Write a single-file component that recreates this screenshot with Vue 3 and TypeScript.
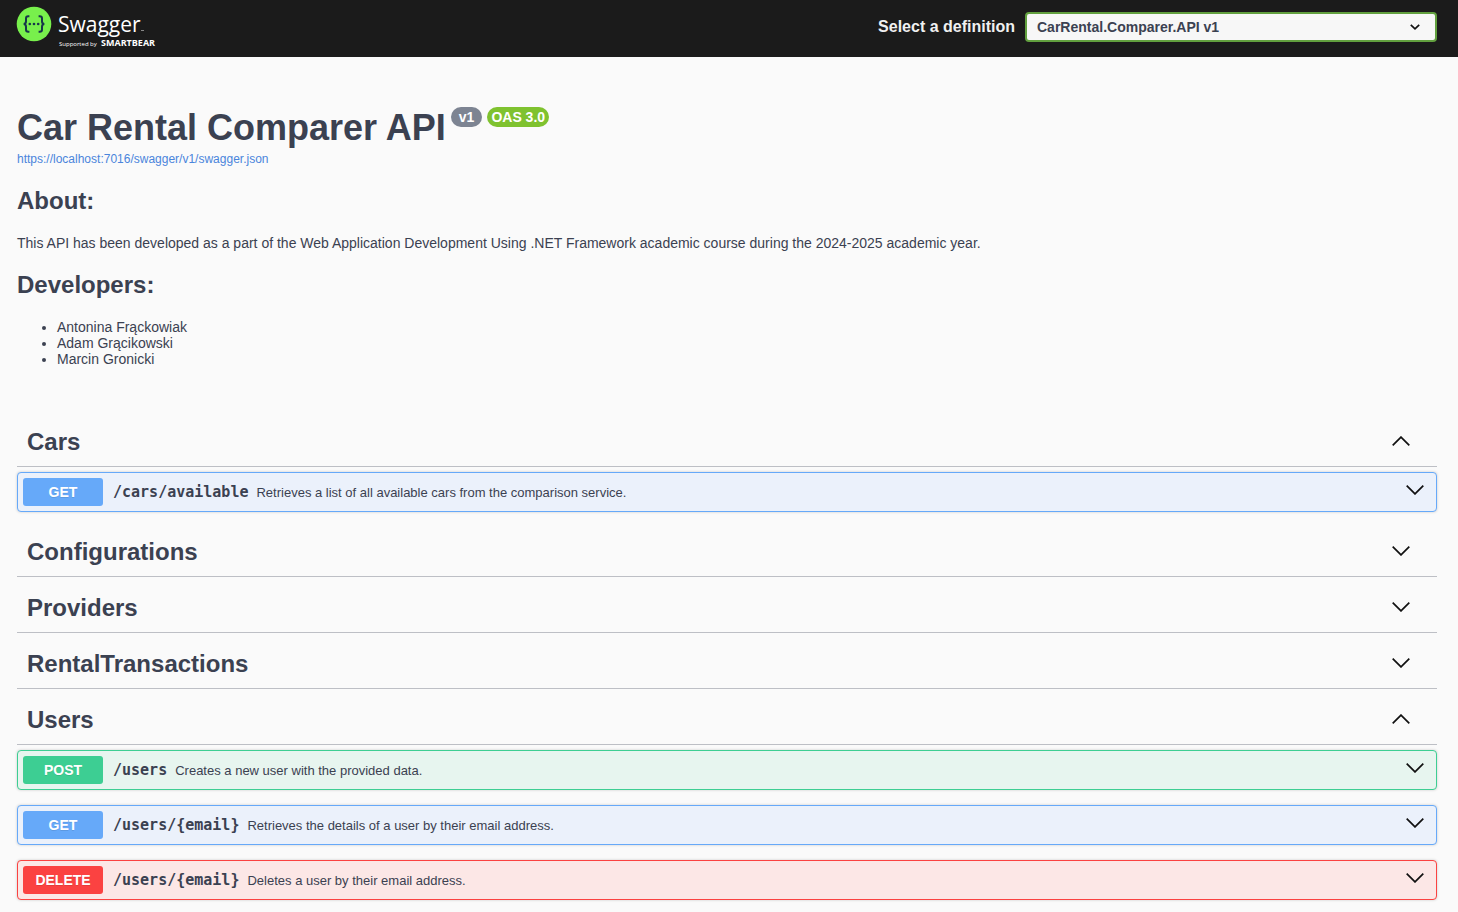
<script setup lang="ts">
import { ref } from 'vue'

type Method = 'get' | 'post' | 'delete'

interface Operation {
  method: Method
  path: string
  summary: string
}

interface Tag {
  name: string
  open: boolean
  operations: Operation[]
}

const definition = ref('v1')
const developers: string[] = ['Antonina Frąckowiak', 'Adam Grącikowski', 'Marcin Gronicki']

const tags = ref<Tag[]>([
  {
    name: 'Cars',
    open: true,
    operations: [
      {
        method: 'get',
        path: '/cars/available',
        summary: 'Retrieves a list of all available cars from the comparison service.',
      },
    ],
  },
  { name: 'Configurations', open: false, operations: [] },
  { name: 'Providers', open: false, operations: [] },
  { name: 'RentalTransactions', open: false, operations: [] },
  {
    name: 'Users',
    open: true,
    operations: [
      { method: 'post', path: '/users', summary: 'Creates a new user with the provided data.' },
      {
        method: 'get',
        path: '/users/{email}',
        summary: 'Retrieves the details of a user by their email address.',
      },
      { method: 'delete', path: '/users/{email}', summary: 'Deletes a user by their email address.' },
    ],
  },
])
</script>

<template>
  <div class="page">
    <header class="topbar">
      <a class="logo" href="#" aria-label="Swagger, supported by SmartBear">
        <svg width="144" height="44" viewBox="0 0 144 44">
          <circle cx="17" cy="19" r="17.3" fill="#78f04c" />
          <g fill="none" stroke="#17364a" stroke-width="2">
            <path d="M12.400 11.200h-1.200c-1.600 0-2.200.8-2.200 2.200v2.800c0 1.800-.7 2.800-2.400 2.800 1.700 0 2.400 1 2.400 2.800v2.800c0 1.400.6 2.200 2.200 2.200h1.200" />
            <path d="M21.600 11.200h1.200c1.600 0 2.200.8 2.200 2.200v2.800c0 1.800.7 2.800 2.400 2.800-1.700 0-2.400 1-2.400 2.800v2.800c0 1.400-.6 2.200-2.200 2.200h-1.200" />
          </g>
          <g fill="#17364a">
            <circle cx="12.800" cy="19" r="1.300" />
            <circle cx="17" cy="19" r="1.300" />
            <circle cx="21.200" cy="19" r="1.300" />
          </g>
          <text class="brand" x="41" y="27">Swagger</text>
          <path d="M124 25.500h3" stroke="#888" stroke-width="1" />
          <text class="support" x="42" y="41">Supported by</text>
          <text class="company" x="84" y="41">SMARTBEAR</text>
        </svg>
      </a>
      <form class="picker" @submit.prevent>
        <label for="definition">Select a definition</label>
        <div class="select-wrap">
          <select id="definition" v-model="definition">
            <option value="v1">CarRental.Comparer.API v1</option>
          </select>
          <svg class="select-arrow" width="10" height="6" viewBox="0 0 10 6" aria-hidden="true">
            <path d="M.8.8 5 4.800 9.200.8" fill="none" stroke="#111" stroke-width="1.700" />
          </svg>
        </div>
      </form>
    </header>

    <main class="content">
      <section class="info">
        <div class="title-row">
          <h1>Car Rental Comparer API</h1>
          <span class="badge version">v1</span>
          <span class="badge oas">OAS 3.0</span>
        </div>
        <a class="spec" href="#">https://localhost:7016/swagger/v1/swagger.json</a>
        <h2>About:</h2>
        <p>
          This API has been developed as a part of the Web Application Development Using .NET Framework
          academic course during the 2024-2025 academic year.
        </p>
        <h2>Developers:</h2>
        <ul>
          <li v-for="person in developers" :key="person">{{ person }}</li>
        </ul>
      </section>

      <section v-for="tag in tags" :key="tag.name" class="tag">
        <h3>
          <button class="tag-head" type="button" :aria-expanded="tag.open" @click="tag.open = !tag.open">
            <span>{{ tag.name }}</span>
            <svg class="arrow" width="18" height="10" viewBox="0 0 18 10" aria-hidden="true">
              <path v-if="tag.open" d="M.7 9.300 9 1.100l8.300 8.200" />
              <path v-else d="M.7.7 9 8.900l8.300-8.200" />
            </svg>
          </button>
        </h3>
        <div v-if="tag.open && tag.operations.length" class="operations">
          <button
            v-for="op in tag.operations"
            :key="op.method + op.path"
            type="button"
            class="operation"
            :class="op.method"
          >
            <span class="method">{{ op.method.toUpperCase() }}</span>
            <span class="path">{{ op.path }}</span>
            <span class="summary">{{ op.summary }}</span>
            <svg class="arrow" width="18" height="10" viewBox="0 0 18 10" aria-hidden="true">
              <path d="M.7.7 9 8.900l8.300-8.200" />
            </svg>
          </button>
        </div>
      </section>
    </main>
  </div>
</template>

<style>
html {
  background: #fafafa;
}
body {
  margin: 0;
  overflow-x: hidden;
}
::-webkit-scrollbar {
  display: none;
}
</style>

<style scoped>
.page {
  color: #3b4151;
  font-family: "Liberation Sans", Arial, sans-serif;
  font-size: 14px;
}
.page * {
  box-sizing: border-box;
}
button {
  margin: 0;
  border: 0;
  background: none;
  color: inherit;
  font: inherit;
  text-align: left;
  cursor: pointer;
}
.topbar {
  display: flex;
  align-items: center;
  justify-content: space-between;
  min-height: 57px;
  padding: 0 21px 3px 17px;
  background: #1b1b1b;
}
.logo {
  display: flex;
}
.logo svg {
  overflow: visible;
}
.logo text {
  fill: #fff;
  font-family: "Open Sans", "Noto Sans", sans-serif;
}
.logo .brand {
  font-size: 21px;
  font-weight: 400;
}
.logo .support {
  font-size: 6px;
}
.logo .company {
  font-size: 9px;
  font-weight: 700;
}
.picker {
  display: flex;
  align-items: center;
  gap: 10px;
  color: #f0f0f0;
}
.picker label {
  font-size: 16px;
  font-weight: 700;
}
.select-wrap {
  display: grid;
  align-items: center;
  width: 412px;
}
.select-wrap > * {
  grid-area: 1 / 1;
}
.select-wrap select {
  width: 100%;
  height: 30px;
  padding: 0 40px 0 10px;
  appearance: none;
  border: 2px solid #62a03f;
  border-radius: 4px;
  background: #f7f7f7;
  color: #3b4151;
  font: 700 14px "Liberation Sans", Arial, sans-serif;
}
.select-arrow {
  justify-self: end;
  margin-right: 17px;
  pointer-events: none;
}
.content {
  padding: 50px 21px 12px 17px;
}
.info {
  padding-bottom: 49px;
}
.title-row {
  display: flex;
  align-items: flex-start;
  gap: 5px;
}
h1 {
  margin: 0;
  font-size: 36px;
  line-height: 42px;
}
.badge {
  padding: 0 8px;
  border-radius: 10px;
  color: #fff;
  font-size: 14px;
  font-weight: 700;
  line-height: 20px;
}
.version {
  background: #7d8492;
}
.oas {
  padding: 0 4px;
  background: #7fc22f;
}
.spec {
  display: block;
  width: fit-content;
  margin-top: 2px;
  color: #4a85dc;
  font-size: 12px;
  line-height: 16px;
  text-decoration: none;
}
h2 {
  margin: 20px 0;
  font-size: 24px;
  line-height: 28px;
}
p {
  margin: 0;
  line-height: 16px;
}
ul {
  margin: 0;
  padding-left: 40px;
  line-height: 16px;
}
h3 {
  margin: 0;
  font-size: 24px;
}
.tag-head {
  display: flex;
  align-items: center;
  justify-content: space-between;
  width: 100%;
  height: 51px;
  margin-bottom: 5px;
  padding: 1px 27px 0 10px;
  border-bottom: 1px solid #bdbfc5;
  line-height: 28px;
}
.arrow {
  flex: none;
  fill: none;
  stroke: #111;
  stroke-width: 1.7;
}
.operations {
  display: grid;
  gap: 15px;
  padding-bottom: 14px;
}
.operation {
  display: flex;
  align-items: center;
  height: 40px;
  padding: 0 12px 0 5px;
  border: 1px solid var(--tone);
  border-radius: 4px;
  background: var(--tint);
  box-shadow: 0 0 3px rgba(0, 0, 0, 0.19);
}
.get {
  --tone: #66a9f9;
  --tint: #ebf1fb;
}
.post {
  --tone: #3dce93;
  --tint: #e7f5ef;
}
.delete {
  --tone: #fb4241;
  --tint: #fce7e6;
}
.method {
  width: 80px;
  border-radius: 3px;
  background: var(--tone);
  color: #fff;
  font-weight: 700;
  line-height: 28px;
  text-align: center;
  text-shadow: 0 1px 0 rgba(0, 0, 0, 0.1);
}
.path {
  margin: 0 8px 0 10px;
  font: 700 15px "DejaVu Sans Mono", monospace;
}
.summary {
  flex: 1;
  font-size: 13px;
}
.operation .arrow {
  margin-bottom: 4px;
}
.tag-head .arrow {
  margin-bottom: 2px;
}
</style>
